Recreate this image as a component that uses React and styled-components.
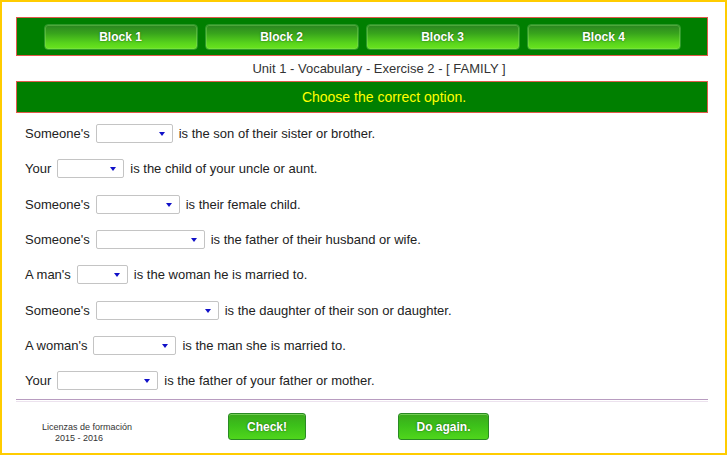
import React from "react";
import styled, { createGlobalStyle } from "styled-components";

const questions = [
  { before: "Someone's", width: 77, after: "is the son of their sister or brother." },
  { before: "Your", width: 67, after: "is the child of your uncle or aunt." },
  { before: "Someone's", width: 84, after: "is their female child." },
  { before: "Someone's", width: 109, after: "is the father of their husband or wife." },
  { before: "A man's", width: 51, after: "is the woman he is married to." },
  { before: "Someone's", width: 123, after: "is the daughter of their son or daughter." },
  { before: "A woman's", width: 83, after: "is the man she is married to." },
  { before: "Your", width: 101, after: "is the father of your father or mother." },
];

const App = () => (
  <>
    <GlobalStyle />
    <Frame>
      <TopBar>
        {["Block 1", "Block 2", "Block 3", "Block 4"].map((b) => (
          <BlockButton key={b}>{b}</BlockButton>
        ))}
      </TopBar>
      <Title>Unit 1 - Vocabulary - Exercise 2 - [ FAMILY ]</Title>
      <Instruction>Choose the correct option.</Instruction>
      <List>
        {questions.map((q, i) => (
          <Row key={i}>
            {q.before}
            <SelectBox $w={q.width} />
            {q.after}
          </Row>
        ))}
      </List>
      <Rule />
      <Footer>
        <Note>
          <div>Licenzas de formación</div>
          <NoteYears>2015 - 2016</NoteYears>
        </Note>
        <ActionButton $w={78}>Check!</ActionButton>
        <ActionButton $w={91} $gap={92}>Do again.</ActionButton>
      </Footer>
    </Frame>
  </>
);

export default App;

const GlobalStyle = createGlobalStyle`
  body {
    margin: 0;
    background: #fff;
    font-family: "Liberation Sans", Arial, sans-serif;
  }
`;

const Frame = styled.div`
  box-sizing: border-box;
  width: 727px;
  height: 455px;
  border: 2px solid #ffcc00;
  padding: 15px 17px 0 14px;
  display: flex;
  flex-direction: column;
`;

const TopBar = styled.div`
  box-sizing: border-box;
  height: 39px;
  border: 1px solid #e05a4a;
  background-color: #007f00;
  display: flex;
  align-items: center;
  justify-content: center;
  gap: 7px;
  padding-top: 1px;
`;

const BlockButton = styled.div`
  box-sizing: border-box;
  width: 154px;
  height: 26px;
  border: 1px solid #2f9a2a;
  border-radius: 4px;
  background: linear-gradient(#2a8420 0%, #38a41c 35%, #58d41c 75%, #6ae41e 100%);
  box-shadow: inset 0 0 0 1px rgba(140, 230, 110, 0.35);
  color: #fff;
  font-weight: bold;
  font-size: 12px;
  text-shadow: 0 0 2px #1c5a10;
  display: flex;
  align-items: center;
  justify-content: center;
`;

const Title = styled.div`
  height: 25px;
  display: flex;
  align-items: center;
  justify-content: center;
  padding-left: 34px;
  font-size: 13px;
  color: #333;
`;

const Instruction = styled.div`
  box-sizing: border-box;
  height: 32px;
  border: 1px solid #e05a4a;
  background-color: #007f00;
  color: #ffff00;
  font-size: 14px;
  display: flex;
  align-items: center;
  justify-content: center;
  padding-left: 44px;
`;

const List = styled.div`
  padding-top: 3px;
`;

const Row = styled.div`
  height: 35.3px;
  display: flex;
  align-items: center;
  gap: 6px;
  padding-left: 9px;
  font-size: 13px;
  color: #222;
`;

const SelectBox = styled.span`
  position: relative;
  box-sizing: border-box;
  width: ${(p) => p.$w}px;
  height: 19px;
  border: 1px solid #c4c4c4;
  border-radius: 2px;
  background: #fff;

  &::after {
    content: "";
    position: absolute;
    right: 7px;
    top: 7px;
    border-left: 3px solid transparent;
    border-right: 3px solid transparent;
    border-top: 4px solid #1010c8;
  }
`;

const Rule = styled.div`
  margin-top: 1px;
  height: 1px;
  border-top: 1px solid #b89cc0;
  border-bottom: 1px solid #ece2ee;
`;

const Footer = styled.div`
  display: flex;
  align-items: flex-start;
  padding-top: 11px;
`;

const Note = styled.div`
  box-sizing: border-box;
  width: 212px;
  padding: 9px 0 0 26px;
  font-size: 9px;
  line-height: 11px;
  color: #333;
`;

const NoteYears = styled.div`
  padding-left: 13px;
`;

const ActionButton = styled.div`
  box-sizing: border-box;
  width: ${(p) => p.$w}px;
  margin-left: ${(p) => p.$gap || 0}px;
  height: 27px;
  border: 1px solid #2a8a24;
  border-radius: 3px;
  background: linear-gradient(#3aa81c 0%, #3cc01a 45%, #4fd61c 100%);
  box-shadow: inset 0 1px 0 rgba(170, 240, 140, 0.5);
  color: #fff;
  font-weight: bold;
  font-size: 12px;
  text-shadow: 0 0 2px #1c5a10;
  display: flex;
  align-items: center;
  justify-content: center;
`;
